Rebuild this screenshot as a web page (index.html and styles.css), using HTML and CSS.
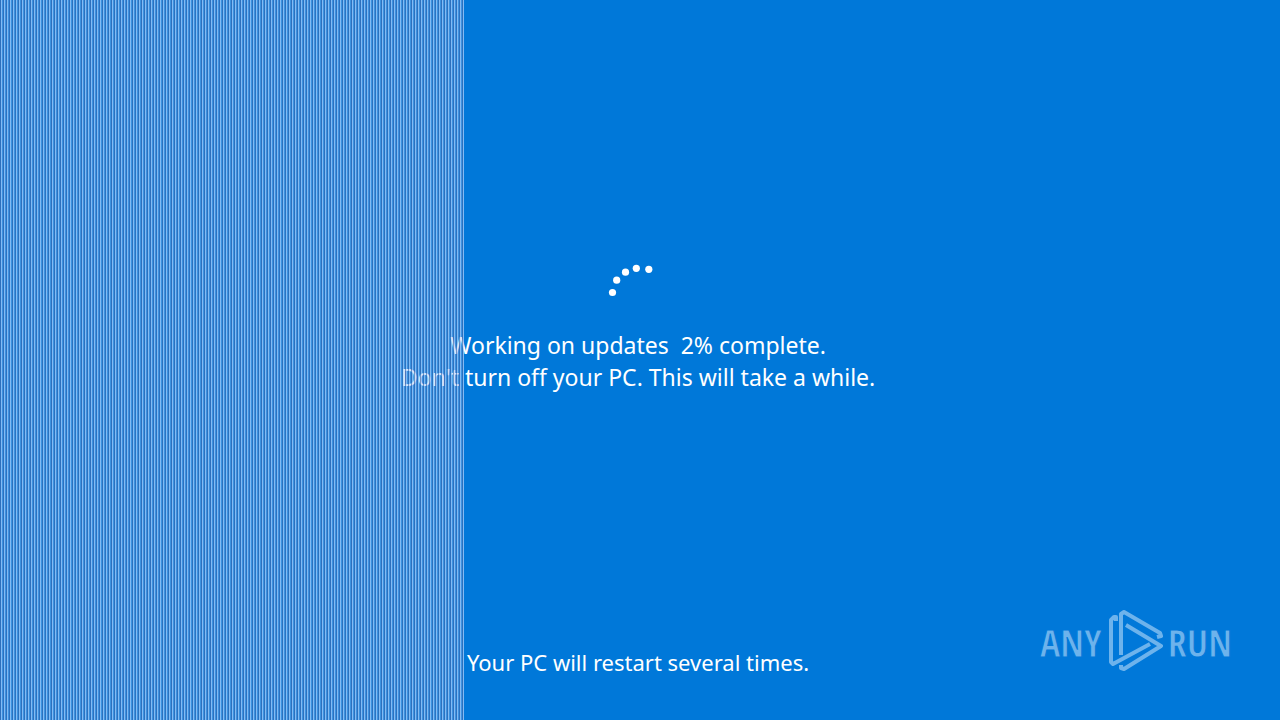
FILE: index.html
```html
<!DOCTYPE html>
<html lang="en">
<head>
<meta charset="utf-8">
<title>Working on updates</title>
<link rel="stylesheet" href="styles.css">
</head>
<body>
<main class="screen">
  <section class="progress" role="status">
    <svg class="spinner" viewBox="0 0 60 60" aria-hidden="true">
      <circle cx="12.5" cy="37.5" r="3.6"/>
      <circle cx="16.7" cy="25.2" r="3.6"/>
      <circle cx="25.5" cy="17.2" r="3.6"/>
      <circle cx="36.3" cy="13.3" r="3.6"/>
      <circle cx="48.8" cy="14.3" r="3.6"/>
    </svg>
    <p class="message">Working on updates&nbsp; 2% complete.</p>
    <p class="message">Don't turn off your PC. This will take a while.</p>
  </section>
  <p class="message notice">Your PC will restart several times.</p>
  <div class="stripes"></div>
  <div class="watermark">
    <span class="brand">ANY</span>
    <svg class="mark" viewBox="0 0 56 64" aria-hidden="true">
      <path d="M9 11V7H7L4 10V52L6 54L43 34"/>
      <path d="M14 45V4L17 2L53 23L54 26L50 27"/>
      <path d="M19 15L54 36L17 59L14 58V55"/>
    </svg>
    <span class="brand">RUN</span>
  </div>
</main>
</body>
</html>
```
FILE: styles.css
```css
* { box-sizing: border-box; }
body { margin: 0; background: #0078d9; }
.screen {
  position: relative;
  display: flex;
  flex-direction: column;
  justify-content: space-between;
  align-items: center;
  min-height: 100vh;
  padding: 255px 0 42px;
  overflow: hidden;
  color: #fff;
  font-family: "Noto Sans", "Open Sans", sans-serif;
}
.progress {
  display: flex;
  flex-direction: column;
  align-items: center;
  padding-right: 4px;
}
.spinner { width: 60px; height: 60px; margin: 0 16px 14px 0; fill: #fff; }
.message { margin: 0; font-size: 23px; line-height: 32px; white-space: nowrap; }
.notice { padding-right: 4px; font-size: 22px; }
.stripes {
  position: absolute;
  inset: 0 auto 0 0;
  width: 36.25%;
  background: repeating-linear-gradient(90deg, rgb(60 110 180 / 0.75) 0 1px, rgb(185 215 255 / 0.7) 1px 2px, rgb(150 185 235 / 0.4) 2px 3px);
}
.watermark {
  position: absolute;
  right: 48px;
  bottom: 46px;
  display: flex;
  align-items: center;
  gap: 5px;
  color: #6db3ec;
}
.brand {
  font: 38px/56px "Open Sans Condensed", "Roboto Condensed", sans-serif;
  -webkit-text-stroke: 1px #0078d9;
}
.mark { width: 56px; height: 64px; fill: none; stroke: currentColor; stroke-width: 4; stroke-linejoin: round; }
```
